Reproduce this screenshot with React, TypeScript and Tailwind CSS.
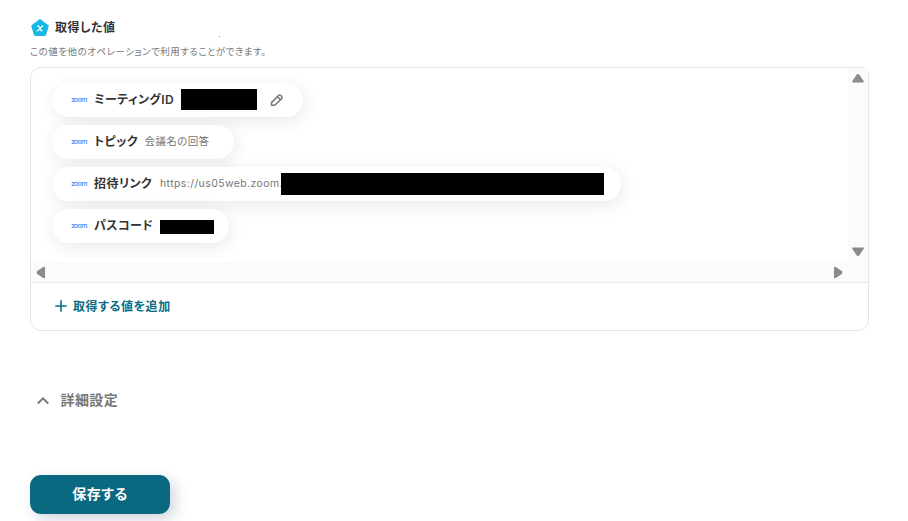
import React from 'react';
import clsx from 'clsx';

const pills = [
  { label: 'ミーティングID', width: 'w-[251px]', labelWidth: 'w-[87px]', mask: 'w-[76px] h-[21px] -mt-px', editable: true },
  { label: 'トピック', width: 'w-[182px]', labelWidth: 'w-[50.5px]', value: '会議名の回答' },
  { label: '招待リンク', width: 'w-[569px]', labelWidth: 'w-[66px]', value: 'https://us05web.zoom.', valueWidth: 'w-[121px]', mask: 'w-[323px] h-[22px]' },
  { label: 'パスコード', width: 'w-[177px]', labelWidth: 'w-[66px]', mask: 'w-[54px] h-[14px] mt-0.5' },
];

const Triangle = ({ className }: { className?: string }) => (
  <svg viewBox="0 0 12 9" className={clsx('w-3 h-[9px] shrink-0', className)} fill="#8b8b8b" stroke="#8b8b8b" strokeWidth="2" strokeLinejoin="round">
    <path d="M5.6 1 1.2 7.6H10.8L6.4 1Z" />
  </svg>
);

const PencilIcon = () => (
  <svg viewBox="0 0 14 14" className="w-[14px] h-[14px] ml-[13px] shrink-0" fill="none" stroke="#757575" strokeWidth="1.5" strokeLinejoin="round" strokeLinecap="round">
    <path d="M1.5 12.3V9.6L8.6 2.5a1.6 1.6 0 0 1 2.2 0l.9.9a1.6 1.6 0 0 1 0 2.2L4.8 12.3Z" />
    <path d="M7.5 3.8 10.4 6.7" />
  </svg>
);

const App: React.FC = () => {
  return (
    <div className="w-[908px] h-[521px] overflow-hidden bg-white pl-[30px] pt-[18px] text-[#333] font-['Inter','Noto_Sans_CJK_JP',sans-serif] [font-feature-settings:'palt']">
      <div className="flex items-center h-5">
        <svg viewBox="0 0 20 20" className="w-5 h-5 shrink-0">
          <path d="M10 2.8 17.2 8.1 14.6 16.6H5.4L2.8 8.1Z" fill="#17b8e8" stroke="#17b8e8" strokeWidth="3" strokeLinejoin="round" />
          <path d="M7.2 8.2h1.5l2.4 4.4h1.5M13.2 8.2h-1.1L8 12.7H6.7" fill="none" stroke="#fff" strokeWidth="1.3" />
        </svg>
        <h2 className="ml-[5px] text-[12px] font-semibold tracking-[0.04em] leading-5">取得した値</h2>
        <span className="ml-[104px] mt-[17px] w-px h-px bg-[#888]" />
      </div>
      <p className="mt-[5px] h-[18px] text-[9.5px] leading-[18px] tracking-[0.052em] text-[#777] whitespace-nowrap">この値を他のオペレーションで利用することができます。</p>

      <div className="mt-1.5 w-[839px] h-[264px] border border-[#e6e6e6] rounded-[11px] rounded-tr-[7px] flex flex-col">
        <div className="flex h-[194px]">
          <div className="w-[817px] pt-[15px] pl-[21px] flex flex-col gap-2 overflow-hidden rounded-tl-[10px]">
            {pills.map(pill => (
              <div key={pill.label} className={clsx('flex items-center h-[34px] shrink-0 rounded-full bg-white pl-[19px] whitespace-nowrap shadow-[2px_4px_18px_rgba(0,0,0,0.09)]', pill.width)}>
                <span className="w-[23px] shrink-0 -mt-[2px] text-[7px] leading-none font-medium tracking-[-0.7px] text-[#3b8cff]">zoom</span>
                <span className={clsx('shrink-0 text-[12px] font-semibold tracking-[0.035em]', pill.labelWidth)}>{pill.label}</span>
                {pill.value && <span className={clsx('shrink-0 text-[10.5px] tracking-[0.038em] text-[#777]', pill.valueWidth)}>{pill.value}</span>}
                {pill.mask && <span className={clsx('shrink-0 bg-black', pill.mask)} />}
                {pill.editable && <PencilIcon />}
              </div>
            ))}
          </div>
          <div className="w-5 bg-[#fbfbfb] flex flex-col items-center justify-between pt-[6px] pb-[6px] pr-px">
            <Triangle />
            <Triangle className="rotate-180" />
          </div>
        </div>
        <div className="h-[21px] shrink-0 bg-[#fbfbfb] border-b border-[#e9e9e9] flex items-center justify-between pl-1 pr-[24px]">
          <Triangle className="-rotate-90" />
          <Triangle className="rotate-90" />
        </div>
        <button className="flex items-center flex-1 pl-[23px] text-[#0b6b83]">
          <svg viewBox="0 0 14 14" className="w-[14px] h-[14px] -mt-px" stroke="currentColor" strokeWidth="1.6">
            <path d="M7 1.3v11.4M1.3 7h11.4" />
          </svg>
          <span className="ml-[5px] text-[12px] font-semibold tracking-[0.045em]">取得する値を追加</span>
        </button>
      </div>

      <div className="mt-[58px] h-5 flex items-center text-[#777]">
        <svg viewBox="0 0 14 10" className="w-[14px] h-[10px] ml-[6px] mt-[3px]" fill="none" stroke="currentColor" strokeWidth="2">
          <path d="M1.8 7.5 7 2.3 12.2 7.5" />
        </svg>
        <span className="ml-[10.5px] text-[14px] font-semibold tracking-[0.03em]">詳細設定</span>
      </div>

      <button className="mt-[66px] w-[140px] h-[39px] rounded-[11px] bg-[#0b6881] text-white text-[14px] font-bold tracking-[0.04em] pb-0.5 shadow-[5px_5px_14px_rgba(30,45,80,0.2)]">保存する</button>
    </div>
  );
};

export default App;
